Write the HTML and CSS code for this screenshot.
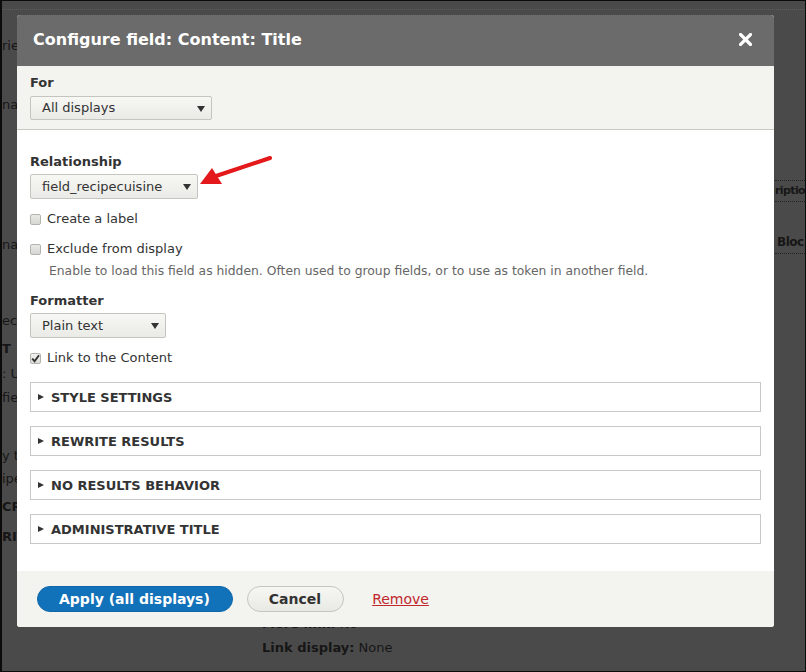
FILE: index.html
```html
<!DOCTYPE html>
<html>
<head>
<meta charset="utf-8">
<link rel="stylesheet" href="styles.css">
</head>
<body>
<div class="page">
  <div class="bg">
    <div class="bg-topline"></div>
    <div class="bg-grid">
      <div class="bg-left">
        <span class="frag f1">riew</span>
        <span class="frag f2">nav</span>
        <span class="frag f3">na</span>
        <span class="frag f4">eci</span>
        <span class="frag f5 strong">T</span>
        <span class="frag f6">: U</span>
        <span class="frag f7">fiel</span>
        <span class="frag f8">y t</span>
        <span class="frag f9">ipe</span>
        <span class="frag f10 strong">CR</span>
        <span class="frag f11 strong">RIT</span>
      </div>
      <div class="bg-mid">
        <div class="bg-line more"><b>More link:</b> No</div>
        <div class="bg-line linkdisp"><b>Link display:</b> None</div>
      </div>
      <div class="bg-right">
        <div class="bg-line ription">riptio</div>
        <div class="bg-line block">Bloc</div>
      </div>
    </div>
  </div>

  <div class="dialog">
    <div class="titlebar">
      <h1 class="title">Configure field: Content: Title</h1>
      <span class="close" aria-label="Close">
        <svg width="13" height="13" viewBox="0 0 13 13"><path d="M1.5 1.5 L11.5 11.5 M11.5 1.5 L1.5 11.5" stroke="#fff" stroke-width="3.2" stroke-linecap="square"/></svg>
      </span>
    </div>

    <div class="for-section">
      <div class="label">For</div>
      <div class="select sel-for"><span>All displays</span><i class="caret"></i></div>
    </div>

    <div class="main">
      <div class="label lbl-rel">Relationship</div>
      <div class="select sel-rel"><span>field_recipecuisine</span><i class="caret"></i></div>

      <div class="cb-row row-create"><span class="cb"></span><span>Create a label</span></div>
      <div class="cb-row row-exclude"><span class="cb"></span><span>Exclude from display</span></div>
      <div class="desc">Enable to load this field as hidden. Often used to group fields, or to use as token in another field.</div>

      <div class="label lbl-fmt">Formatter</div>
      <div class="select sel-fmt"><span>Plain text</span><i class="caret"></i></div>

      <div class="cb-row row-link"><span class="cb checked"><svg width="9" height="9" viewBox="0 0 9 9"><path d="M1.2 4.6 L3.6 7.2 L8 1.2" fill="none" stroke="#333" stroke-width="1.9"/></svg></span><span>Link to the Content</span></div>

      <div class="details-list">
        <div class="details"><i class="tri"></i><span>Style settings</span></div>
        <div class="details"><i class="tri"></i><span>Rewrite results</span></div>
        <div class="details"><i class="tri"></i><span>No results behavior</span></div>
        <div class="details"><i class="tri"></i><span>Administrative title</span></div>
      </div>
    </div>

    <div class="footer">
      <span class="btn btn-primary">Apply (all displays)</span>
      <span class="btn btn-default">Cancel</span>
      <a class="remove" href="#">Remove</a>
    </div>
  </div>

  <svg class="annot" width="85" height="40" viewBox="195 150 85 40">
    <path d="M216 176 L270 158" stroke="#e3191b" stroke-width="4" stroke-linecap="round"/>
    <polygon points="200,184 212,168 222,184" fill="#e3191b"/>
  </svg>
</div>
</body>
</html>
```

FILE: styles.css
```css
* { box-sizing: border-box; }

body {
  margin: 0;
  background: #000;
}

.page {
  position: relative;
  width: 806px;
  height: 672px;
  border-style: solid;
  border-color: #0b0b0b;
  border-width: 1px 1px 1px 2px;
  background: #4a4a4a;
  overflow: hidden;
  font-family: "DejaVu Sans", "Liberation Sans", sans-serif;
  font-size: 13px;
  color: #333;
}

/* background page (under the modal) */
.bg-topline {
  height: 9px;
  border-bottom: 1px dotted #5e5e5e;
}

.bg-grid {
  display: grid;
  grid-template-columns: 15px 758px 30px;
  color: #161616;
}

.bg-left {
  display: flex;
  flex-direction: column;
  align-items: flex-start;
}

.frag {
  display: block;
  line-height: 16px;
  white-space: nowrap;
}
.strong { font-weight: bold; }
.f1 { margin-top: 28px; }
.f2 { margin-top: 43px; }
.f3 { margin-top: 124px; }
.f4 { margin-top: 60px; }
.f5 { margin-top: 12px; }
.f6 { margin-top: 9px; }
.f7 { margin-top: 8px; }
.f8 { margin-top: 42px; }
.f9 { margin-top: 7px; }
.f10 { margin-top: 12px; }
.f11 { margin-top: 14px; }

.bg-line {
  line-height: 16px;
  white-space: nowrap;
}

.bg-mid { padding-left: 245px; }
.more { margin-top: 606px; }
.linkdisp { margin-top: 8px; }

.bg-right { overflow: hidden; }
.ription {
  margin-top: 170px;
  font-weight: bold;
  font-size: 11px;
  letter-spacing: -0.6px;
  padding: 2px 0;
  border-top: 1px dotted #222;
  border-bottom: 1px dotted #222;
}
.block {
  margin-top: 32px;
  padding-left: 2px;
  font-weight: bold;
  font-size: 12px;
  letter-spacing: -0.5px;
  padding-bottom: 3px;
  border-bottom: 1px dotted #222;
}

/* dialog */
.dialog {
  position: absolute;
  left: 15px;
  top: 14px;
  width: 757px;
  height: 612px;
  display: flex;
  flex-direction: column;
  background: #fff;
  border-radius: 3px;
  overflow: hidden;
}

.titlebar {
  height: 51px;
  flex: none;
  background: #6b6b6b;
  display: flex;
  align-items: center;
  justify-content: space-between;
  padding: 0 22px 2px 16px;
}

.title {
  margin: 0;
  font-size: 16px;
  font-weight: bold;
  color: #fff;
  line-height: 19px;
}

.close {
  display: flex;
  width: 13px;
  height: 13px;
}

.for-section {
  flex: none;
  background: #f3f3ef;
  border-bottom: 1px solid #c8c8c4;
  padding: 9px 13px;
  display: flex;
  flex-direction: column;
  align-items: flex-start;
  gap: 5px;
}

.label {
  font-weight: bold;
  line-height: 16px;
  color: #333;
}

.select {
  display: flex;
  align-items: center;
  justify-content: space-between;
  height: 25px;
  padding: 0 6px 0 11px;
  border: 1px solid #c4c4c0;
  border-radius: 2px;
  background: linear-gradient(#f7f7f4, #eaeae6);
  color: #333;
  line-height: 16px;
}

.caret {
  display: block;
  width: 0;
  height: 0;
  border-left: 4px solid transparent;
  border-right: 4px solid transparent;
  border-top: 6px solid #333;
  margin-top: 1px;
}

.sel-for { width: 182px; height: 24px; }
.sel-rel { width: 168px; }
.sel-fmt { width: 136px; }

.main {
  flex: 1;
  padding: 24px 13px 0;
  display: flex;
  flex-direction: column;
  align-items: flex-start;
}

.sel-rel { margin-top: 4px; }

.cb-row {
  display: flex;
  align-items: center;
  gap: 6px;
  height: 20px;
  line-height: 16px;
  color: #333;
}

.row-create { margin-top: 10px; }
.row-exclude { margin-top: 10px; }
.row-link { margin-top: 10px; }

.cb {
  width: 11px;
  height: 11px;
  flex: none;
  border: 1px solid #b3b3b0;
  border-radius: 2px;
  background: linear-gradient(#e9e9e6, #d6d6d2);
  display: flex;
  align-items: center;
  justify-content: center;
}
.cb.checked { background: linear-gradient(#f2f2ef, #dcdcd8); }

.desc {
  margin-top: 4px;
  padding-left: 19px;
  font-size: 12.35px;
  line-height: 16px;
  color: #666;
}

.lbl-fmt { margin-top: 14px; }
.sel-fmt { margin-top: 4px; }

.details-list {
  align-self: stretch;
  margin-top: 14px;
  display: flex;
  flex-direction: column;
  gap: 14px;
}

.details {
  height: 30px;
  border: 1px solid #c8c8c8;
  display: flex;
  align-items: center;
  padding-left: 7px;
  gap: 7px;
  font-weight: bold;
  text-transform: uppercase;
  color: #333;
}

.tri {
  display: block;
  width: 0;
  height: 0;
  border-top: 3.5px solid transparent;
  border-bottom: 3.5px solid transparent;
  border-left: 6px solid #333;
}

.footer {
  flex: none;
  height: 56px;
  background: #f3f3ef;
  display: flex;
  align-items: center;
  padding-left: 20px;
}

.btn {
  display: flex;
  align-items: center;
  height: 26px;
  border-radius: 13px;
  font-size: 14px;
  font-weight: bold;
}

.btn-primary {
  padding: 0 22px 0 21px;
  background: #1171b9;
  color: #fff;
  border: 1px solid #0f67a9;
}

.btn-default {
  margin-left: 14px;
  padding: 0 22px 0 21px;
  background: linear-gradient(#f6f6f3, #e9e9e4);
  border: 1px solid #c4c4c0;
  color: #333;
}

.remove {
  margin-left: 28px;
  font-size: 14px;
  color: #c0282d;
  text-decoration: underline;
}

.annot {
  position: absolute;
  left: 193px;
  top: 149px;
  pointer-events: none;
}
```
